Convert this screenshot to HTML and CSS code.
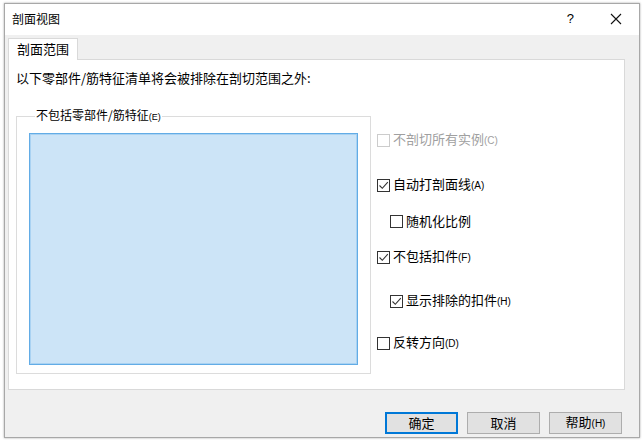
FILE: index.html
```html
<!DOCTYPE html>
<html lang="zh-CN">
<head>
<meta charset="utf-8">
<title>剖面视图</title>
<link rel="stylesheet" href="styles.css">
</head>
<body>
<div class="dialog">
  <div class="titlebar">
    <span class="title">剖面视图</span>
    <span class="tb-help">?</span>
    <span class="tb-close">
      <svg width="12" height="12" viewBox="0 0 12 12"><path d="M1 1L11 11M11 1L1 11" stroke="#111" stroke-width="1.1" fill="none"/></svg>
    </span>
  </div>
  <div class="body">
    <div class="tabs"><div class="tab">剖面范围</div></div>
    <div class="panel">
      <div class="intro">以下零部件/筋特征清单将会被排除在剖切范围之外:</div>
      <div class="content">
        <fieldset class="group">
          <legend class="legend">不包括零部件/筋特征<span class="acc">(E)</span></legend>
          <div class="listbox"></div>
        </fieldset>
        <div class="options">
          <div class="opt opt-1 disabled"><span class="cb"></span><span class="lbl">不剖切所有实例<span class="acc">(C)</span></span></div>
          <div class="opt opt-2"><span class="cb checked"><svg width="11" height="11" viewBox="0 0 11 11"><path d="M1.5 5.5L4.3 8.3L9.8 2.2" stroke="#333" stroke-width="1.1" fill="none"/></svg></span><span class="lbl">自动打剖面线<span class="acc">(A)</span></span></div>
          <div class="opt opt-3 indent"><span class="cb"></span><span class="lbl">随机化比例</span></div>
          <div class="opt opt-4"><span class="cb checked"><svg width="11" height="11" viewBox="0 0 11 11"><path d="M1.5 5.5L4.3 8.3L9.8 2.2" stroke="#333" stroke-width="1.1" fill="none"/></svg></span><span class="lbl">不包括扣件<span class="acc">(F)</span></span></div>
          <div class="opt opt-5 indent"><span class="cb checked"><svg width="11" height="11" viewBox="0 0 11 11"><path d="M1.5 5.5L4.3 8.3L9.8 2.2" stroke="#333" stroke-width="1.1" fill="none"/></svg></span><span class="lbl">显示排除的扣件<span class="acc">(H)</span></span></div>
          <div class="opt opt-6"><span class="cb"></span><span class="lbl">反转方向<span class="acc">(D)</span></span></div>
        </div>
      </div>
    </div>
    <div class="buttons">
      <button class="btn default">确定</button>
      <button class="btn">取消</button>
      <button class="btn">帮助<span class="acc">(H)</span></button>
    </div>
  </div>
</div>
</body>
</html>
```
FILE: styles.css
```css
html, body {
  margin: 0;
  padding: 0;
  background: #ffffff;
}
body {
  font-family: "Noto Sans CJK SC", "Liberation Sans", sans-serif;
  font-size: 13px;
  color: #000;
  width: 644px;
  height: 442px;
  overflow: hidden;
}
.dialog {
  margin: 3px 4px 4px 4px;
  width: 636px;
  height: 435px;
  box-sizing: border-box;
  border: 1px solid #a8a8a8;
  box-shadow: 0 0 2px rgba(0,0,0,0.35);
  background: #f0f0f0;
  display: flex;
  flex-direction: column;
}
.titlebar {
  height: 31px;
  background: #fff;
  display: flex;
  align-items: center;
  padding-left: 7px;
  padding-right: 17px;
}
.title {
  flex: 1;
  font-size: 12px;
  line-height: 16px;
  margin-top: -2px;
}
.tb-help {
  font-family: "Liberation Sans", sans-serif;
  font-size: 13px;
  margin-right: 36px;
  margin-top: -2px;
}
.tb-close {
  display: flex;
  margin-top: -2px;
}
.body {
  flex: 1;
  padding: 3px 14px 0 3px;
  display: flex;
  flex-direction: column;
}
.tabs {
  display: flex;
  height: 21px;
  position: relative;
  z-index: 1;
}
.tab {
  width: 70px;
  height: 22px;
  box-sizing: border-box;
  background: #fff;
  border: 1px solid #d9d9d9;
  border-bottom: none;
  text-align: center;
  line-height: 20px;
  font-size: 13px;
}
.panel {
  background: #fff;
  border: 1px solid #d9d9d9;
  height: 331px;
  box-sizing: border-box;
  padding: 10px 0 0 7px;
}
.intro {
  line-height: 16px;
}
.content {
  display: flex;
  margin-top: 21px;
}
.group {
  margin: 0;
  width: 355px;
  height: 267px;
  box-sizing: border-box;
  border: 1px solid #dcdcdc;
  padding: 8px 12px 0 12px;
}
.legend {
  padding: 0 1px;
  margin-left: 6px;
  line-height: 16px;
  font-size: 12px;
}
.legend .acc {
  font-size: 9px;
}
.listbox {
  height: 232px;
  box-sizing: border-box;
  background: #cce4f7;
  border: 1px solid #62ace6;
  box-shadow: inset 0 0 0 1px #a9d2f2;
}
.acc {
  font-family: "Liberation Sans", sans-serif;
  font-size: 10px;
}
.options {
  margin-left: 6px;
  padding-top: 25px;
  display: flex;
  flex-direction: column;
}
.opt {
  display: flex;
  align-items: center;
  height: 16px;
  line-height: 16px;
}
.opt-2 { margin-top: 29px; }
.opt-3 { margin-top: 20px; }
.opt-4 { margin-top: 20px; }
.opt-5 { margin-top: 28px; }
.opt-6 { margin-top: 26px; }
.indent { margin-left: 13px; }
.cb {
  width: 13px;
  height: 13px;
  box-sizing: border-box;
  border: 1px solid #333;
  background: #fff;
  display: flex;
  align-items: center;
  justify-content: center;
  margin-right: 3px;
}
.disabled .cb { border-color: #cccccc; }
.disabled .lbl { color: #a0a0a0; }
.buttons {
  display: flex;
  justify-content: flex-end;
  gap: 9px;
  margin-top: 22px;
  margin-right: 3px;
}
.btn {
  width: 73px;
  height: 22px;
  box-sizing: border-box;
  background: #e1e1e1;
  border: 1px solid #adadad;
  font-family: "Noto Sans CJK SC", "Liberation Sans", sans-serif;
  font-size: 13px;
  color: #000;
  padding: 0;
  line-height: 18px;
}
.btn.default {
  border: 2px solid #0078d7;
}
```
